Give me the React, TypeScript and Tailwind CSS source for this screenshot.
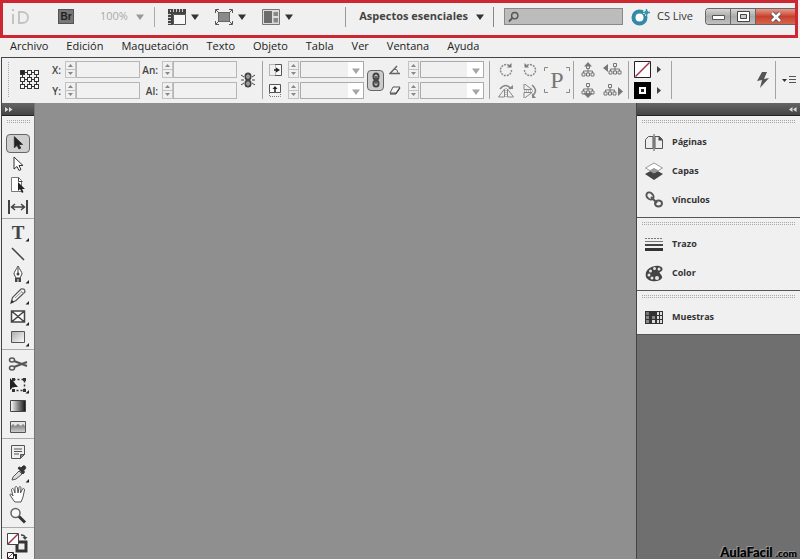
import React from 'react';

const Caret: React.FC<{ className?: string }> = ({ className = 'text-[#333]' }) => (
  <svg width="8" height="6" viewBox="0 0 8 6" className={`shrink-0 ${className}`} fill="currentColor">
    <path d="M0 0.500h8L4 6z" />
  </svg>
);

const Separator: React.FC = () => <div className="w-px shrink-0 self-stretch bg-[#a3a3a3]" />;

const Grip: React.FC<{ className?: string }> = ({ className = '' }) => (
  <div className={`bg-[conic-gradient(#a8a8a8_25%,transparent_0)] bg-[size:2px_2px] ${className}`} />
);

/* ---------- Application bar ---------- */

const RulerIcon = () => (
  <svg width="18" height="16" viewBox="0 0 18 16">
    <path d="M0 0h18v5H5v11H0z" fill="#444" />
    <path d="M2.500 1v2M5.500 0v3M8.500 0v3M11.500 0v3M14.500 0v3M0 5.500h3M0 8.500h3M0 11.500h3M0 14.500h3" stroke="#ccc" />
    <path d="M5.500 5.500h12v10h-12z" fill="#f8f8f8" stroke="#555" />
  </svg>
);

const ScreenIcon = () => (
  <svg width="18" height="16" viewBox="0 0 18 16">
    <path d="M3.500 3.500h11v9h-11z" fill="#8a8a8a" stroke="#666" />
    <path d="M0.500 4V.500H4M14 .500h3.500V4M0.500 12v3.500H4M14 15.500h3.500V12M1 1l3 3M17 1l-3 3M1 15l3-3M17 15l-3-3" fill="none" stroke="#555" />
  </svg>
);

const ArrangeIcon = () => (
  <svg width="18" height="16" viewBox="0 0 18 16">
    <path d="M0.500 0.500h17v15H.500z" fill="#ddd" stroke="#777" />
    <path d="M2 2h8v12H2z" fill="#6c6c6c" />
    <path d="M11.500 3h4.500v4h-4.500zM11.500 9h4.500v4.500h-4.500z" fill="#888" />
  </svg>
);

const AppBar: React.FC = () => (
  <header className="mr-[2px] flex h-[38px] items-center border-[3px] border-[#cd2733] pb-[5px] pl-[7px]">
    <svg width="20" height="16" viewBox="0 0 20 16" className="shrink-0" fill="none" stroke="#c4c4c4" strokeWidth="2">
      <path d="M3 5v10M3 0v2M9 3v11h3c8 0 8-11 0-11z" />
    </svg>
    <button className="ml-7 flex h-[15px] w-4 shrink-0 items-center justify-center border border-[#555] bg-[#777] font-['Liberation_Sans'] text-[10px] font-bold text-[#222]">
      Br
    </button>
    <button className="ml-[26px] flex shrink-0 items-center gap-2 text-[11px] text-[#aaa]">
      100% <Caret className="text-[#999]" />
    </button>
    <div className="ml-[10px] h-5 w-px bg-[#aaa]" />
    <div className="ml-[13px] flex shrink-0 items-center gap-4">
      {[RulerIcon, ScreenIcon, ArrangeIcon].map((Icon, i) => (
        <button key={i} aria-label={['Ver opciones', 'Modo de pantalla', 'Organizar documentos'][i]} className="flex items-center gap-[5px]">
          <Icon />
          <Caret />
        </button>
      ))}
    </div>
    <div className="ml-auto flex shrink-0 items-center">
      <div className="h-5 w-px bg-[#999]" />
      <button className="ml-[13px] flex items-center gap-2 whitespace-nowrap text-[11px] font-bold text-[#444]">
        Aspectos esenciales <Caret />
      </button>
      <div className="ml-[9px] h-5 w-px bg-[#888]" />
      <label className="ml-[10px] flex h-[17px] w-[119px] items-center border border-[#888] bg-[#bcbcbc] pl-[3px]">
        <svg width="12" height="12" viewBox="0 0 12 12" fill="none" stroke="#555" strokeWidth="1.500">
          <circle cx="7.500" cy="4.500" r="3.500" />
          <path d="M5 7L1 11" strokeWidth="2" />
        </svg>
        <input aria-label="Buscar" className="w-full min-w-0 bg-transparent pl-1 text-[11px] outline-none" />
      </label>
      <button className="ml-2 flex items-center gap-[6px] whitespace-nowrap text-[11px] text-[#333]">
        <svg width="20" height="18" viewBox="0 0 20 18">
          <circle cx="8.500" cy="9.500" r="6" fill="#fff" stroke="#3489a6" strokeWidth="4" />
          <path d="M12 4.500h7M15.500 1v7" stroke="#f0f0f0" strokeWidth="3" />
          <path d="M12 4.500h7M15.500 1v7" stroke="#3b94ae" strokeWidth="1.500" />
          <circle cx="15.500" cy="4.500" r="2" fill="#3b94ae" />
        </svg>
        CS Live
      </button>
      <div className="ml-3 flex h-[17px] overflow-hidden rounded-l border border-r-0 border-[#666]">
        <button aria-label="Minimizar" className="flex w-[25px] items-center justify-center border-r border-[#666] bg-linear-to-b from-[#d6d6d6] via-[#aaa] to-[#c0c0c0]">
          <svg width="13" height="10" viewBox="0 0 13 10"><path d="M.500 3.500h12v4H.500z" fill="#fff" stroke="#555" /></svg>
        </button>
        <button aria-label="Maximizar" className="flex w-[25px] items-center justify-center border-r border-[#666] bg-linear-to-b from-[#d6d6d6] via-[#aaa] to-[#c0c0c0]">
          <svg width="13" height="11" viewBox="0 0 13 11">
            <path d="M.500 .500h12v10H.500z" fill="#fff" stroke="#444" />
            <path d="M3.500 3.500h6v4h-6z" fill="#ccc" stroke="#444" />
          </svg>
        </button>
        <button aria-label="Cerrar" className="flex w-[39px] items-center justify-center bg-linear-to-b from-[#e39a8c] via-[#c8402c] to-[#d4664e]">
          <svg width="14" height="12" viewBox="0 0 14 12">
            <path d="M3 2l8 8M11 2l-8 8" stroke="#555" strokeWidth="4.500" />
            <path d="M3 2l8 8M11 2l-8 8" stroke="#fff" strokeWidth="2.500" />
          </svg>
        </button>
      </div>
    </div>
  </header>
);

const menus = ['Archivo', 'Edición', 'Maquetación', 'Texto', 'Objeto', 'Tabla', 'Ver', 'Ventana', 'Ayuda'];

const MenuBar: React.FC = () => (
  <nav className="flex h-[19px] items-start gap-[18px] pl-[10px] text-[11px] leading-4 text-[#222]">
    {menus.map((m) => (
      <button key={m}>{m}</button>
    ))}
  </nav>
);

/* ---------- Control panel ---------- */

const Spinner: React.FC<{ name: string }> = ({ name }) => (
  <div className="flex h-[17px] w-[11px] shrink-0 flex-col border border-[#c2c2c2]">
    <button aria-label={`Aumentar ${name}`} className="flex flex-1 items-center justify-center border-b border-[#c2c2c2]">
      <svg width="5" height="3" viewBox="0 0 5 3" fill="#888"><path d="M0 3h5L2.500 0z" /></svg>
    </button>
    <button aria-label={`Disminuir ${name}`} className="flex flex-1 items-center justify-center">
      <svg width="5" height="3" viewBox="0 0 5 3" fill="#888"><path d="M0 0h5L2.500 3z" /></svg>
    </button>
  </div>
);

const NumberField: React.FC<{ id: string; label: string }> = ({ id, label }) => (
  <div className="flex h-[17px] items-center">
    <label htmlFor={id} className="w-[17px] text-right text-[10px] font-semibold leading-4 text-[#444]">{label}</label>
    <div className="ml-1 flex">
      <Spinner name={label} />
      <input id={id} className="h-[17px] w-16 border border-[#b5b5b5] bg-[#f1f1f1] px-1 text-[10px] outline-none" />
    </div>
  </div>
);

const SelectField: React.FC<{ name: string; icon: React.ReactNode }> = ({ name, icon }) => (
  <div className="flex h-[17px] items-center">
    <div className="flex w-[14px] justify-center">{icon}</div>
    <div className="ml-[6px]"><Spinner name={name} /></div>
    <div className="relative ml-px">
      <select aria-label={name} className="block h-[17px] w-16 appearance-none border border-[#aaa] bg-linear-to-r from-[#f0f0f0] from-75% to-white to-75% text-[10px]" />
      <Caret className="pointer-events-none absolute top-[7px] right-1 text-[#a5a5a5]" />
    </div>
  </div>
);

const ScaleX = () => (
  <svg width="13" height="12" viewBox="0 0 13 12">
    <path d="M6 .500h6.500v11H6" fill="#f8f8f8" stroke="#555" />
    <path d="M.500 .500h6v11h-6z" fill="none" stroke="#777" strokeDasharray="1 1" />
    <path d="M5 6h3" stroke="#222" strokeWidth="1.500" /><path d="M7 3.500l4 2.500-4 2.500z" fill="#222" />
  </svg>
);
const ScaleY = () => (
  <svg width="12" height="13" viewBox="0 0 12 13">
    <path d="M.500 .500h11v8H.500z" fill="#f8f8f8" stroke="#555" />
    <path d="M.500 9v3.500h11V9" fill="none" stroke="#777" strokeDasharray="1 1" />
    <path d="M6 4v4" stroke="#222" strokeWidth="1.500" /><path d="M3.500 5L6 2l2.500 3z" fill="#222" />
  </svg>
);
const AngleIcon = () => (
  <svg width="12" height="10" viewBox="0 0 12 10" fill="none" stroke="#666">
    <path d="M8 1L1 8.500h10" strokeWidth="1.500" /><path d="M5 4q4 0 4 4" />
  </svg>
);
const ShearIcon = () => (
  <svg width="12" height="9" viewBox="0 0 12 9"><path d="M4 1h7L7 7H1z" fill="#f5f5f5" stroke="#555" /><path d="M1 8h6l4-6" fill="none" stroke="#333" /></svg>
);

const ChainLink: React.FC<{ broken?: boolean }> = ({ broken }) => (
  <svg width="14" height="16" viewBox="0 0 14 16" fill="none" stroke="#444">
    <rect x="4.500" y="1.500" width="5" height="6" rx="2.500" strokeWidth="2" />
    <rect x="4.500" y="8.500" width="5" height="6" rx="2.500" strokeWidth="2" />
    {broken ? <path d="M0 3l3 2M14 3l-3 2M0 8h3M14 8h-3M0 13l3-2M14 13l-3-2M7 3v3M7 10v3" /> : <path d="M7 4v8" strokeWidth="1.500" />}
  </svg>
);

const ReferencePoint = () => (
  <svg width="20" height="20" viewBox="0 0 20 20" fill="#f8f8f8" stroke="#333">
    <path d="M2.500 2.500h14v14h-14zM2.500 9.500h14M9.500 2.500v14" fill="none" />
    {[2.5, 9.5, 16.5].map((y) => [2.5, 9.5, 16.5].map((x) => (
      <rect key={`${x}-${y}`} x={x - 2} y={y - 2} width="4" height="4" fill={x + y === 5 ? '#222' : '#f8f8f8'} />
    )))}
  </svg>
);

const RotateIcon: React.FC<{ flip?: boolean }> = ({ flip }) => (
  <svg width="14" height="14" viewBox="0 0 14 14" fill="none" stroke="#888">
    <g transform={flip ? 'translate(14 0) scale(-1 1)' : undefined}>
      <path d="M10 2.500A5.500 5.500 0 1 0 12.500 7" strokeDasharray="2 1" strokeWidth="1.500" />
      <path d="M8 4.500h4.500V0z" fill="#777" stroke="none" />
    </g>
  </svg>
);

const FlipIcon: React.FC<{ vertical?: boolean }> = ({ vertical }) => (
  <svg width="16" height="14" viewBox="0 0 16 14" fill="none" stroke="#888">
    <g transform={vertical ? 'rotate(90 8 7)' : undefined}>
      <path d="M6.500 5v8H.500zM9.500 5v8h6z" /><path d="M8 4v10" strokeDasharray="1 1" />
      <path d="M2 5q6-7 11 0" strokeWidth="1.500" /><path d="M10 5h5V1z" fill="#888" stroke="none" />
    </g>
  </svg>
);

const tree = 'M7 5v3M2.500 10V8h9v2M7 8v2M1 10h3v3H1zM5.500 10h3v3h-3zM10 10h3v3h-3zM5.500 2.500h3v3h-3z';
const TreeIcon: React.FC<{ dir: 'up' | 'down' | 'left' | 'right' }> = ({ dir }) => (
  <svg width="20" height="15" viewBox="0 0 20 15" fill="none" stroke="#777">
    {dir === 'up' && <><g transform="translate(0 1)"><path d={tree} /></g><path d="M3 4.500h8L7 0z" fill="#777" stroke="none" /></>}
    {dir === 'down' && <><g transform="translate(0 -2)"><path d={tree} /></g><path d="M2 10h10l-5 5z" fill="#777" stroke="none" /></>}
    {dir === 'left' && <><g transform="translate(5 -1)"><path d={tree} /></g><path d="M5 2v8L0 6z" fill="#777" stroke="none" /></>}
    {dir === 'right' && <><g transform="translate(0 -1)"><path d={tree} /></g><path d="M15 4v9l5-4.500z" fill="#777" stroke="none" /></>}
  </svg>
);

const SwatchArrow: React.FC<{ label: string }> = ({ label }) => (
  <button aria-label={label} className="flex h-[17px] w-4 items-center justify-center">
    <svg width="4" height="7" viewBox="0 0 4 7" fill="#444"><path d="M0 0l4 3.500L0 7z" /></svg>
  </button>
);

const ControlPanel: React.FC = () => (
  <section className="ml-px flex h-[46px] shrink-0 items-center border-t border-l border-[#444] pt-[3px] pb-1 pl-[5px]">
    <Grip className="h-9 w-[3px] shrink-0" />
    <div className="ml-[10px] shrink-0"><ReferencePoint /></div>
    <div className="ml-1 flex shrink-0 flex-col gap-1">
      <NumberField id="pos-x" label="X:" />
      <NumberField id="pos-y" label="Y:" />
    </div>
    <div className="ml-px flex shrink-0 flex-col gap-1">
      <NumberField id="ancho" label="An:" />
      <NumberField id="alto" label="Al:" />
    </div>
    <button aria-label="Restringir proporciones" className="ml-1 shrink-0"><ChainLink broken /></button>
    <div className="ml-[7px] flex self-stretch"><Separator /></div>
    <div className="ml-[5px] flex shrink-0 flex-col gap-1">
      <SelectField name="Escala X" icon={<ScaleX />} />
      <SelectField name="Escala Y" icon={<ScaleY />} />
    </div>
    <button aria-label="Restringir escala" className="ml-[3px] flex h-[21px] w-[17px] shrink-0 items-center justify-center rounded-sm border border-[#666] bg-[#ccc]">
      <ChainLink />
    </button>
    <div className="ml-1 flex shrink-0 flex-col gap-1">
      <SelectField name="Ángulo" icon={<AngleIcon />} />
      <SelectField name="Distorsión" icon={<ShearIcon />} />
    </div>
    <div className="ml-[5px] flex self-stretch"><Separator /></div>
    <div className="ml-2 grid shrink-0 grid-cols-2 gap-x-2 gap-y-1">
      <button aria-label="Girar a la derecha" className="flex h-[17px] w-4 items-center justify-center"><RotateIcon /></button>
      <button aria-label="Girar a la izquierda" className="flex h-[17px] w-4 items-center justify-center"><RotateIcon flip /></button>
      <button aria-label="Voltear horizontal" className="flex h-[17px] w-4 items-center justify-center"><FlipIcon /></button>
      <button aria-label="Voltear vertical" className="flex h-[17px] w-4 items-center justify-center"><FlipIcon vertical /></button>
    </div>
    <div className="relative ml-[6px] flex h-[26px] w-[26px] shrink-0 items-center justify-center font-['Liberation_Serif'] text-[24px] leading-6 text-[#777]">
      <svg width="26" height="26" viewBox="0 0 26 26" className="absolute inset-0" fill="none" stroke="#888">
        <path d="M.500 4V.500H4M22 .500h3.500V4M.500 22v3.500H4M22 25.500h3.500V22" />
      </svg>
      P
    </div>
    <div className="ml-[3px] flex self-stretch"><Separator /></div>
    <div className="ml-[7px] grid shrink-0 grid-cols-2 gap-x-[2px] gap-y-1">
      <button aria-label="Seleccionar contenedor" className="flex h-[17px] items-center"><TreeIcon dir="up" /></button>
      <button aria-label="Seleccionar anterior" className="flex h-[17px] items-center"><TreeIcon dir="left" /></button>
      <button aria-label="Seleccionar contenido" className="flex h-[17px] items-center"><TreeIcon dir="down" /></button>
      <button aria-label="Seleccionar siguiente" className="flex h-[17px] items-center"><TreeIcon dir="right" /></button>
    </div>
    <div className="ml-[5px] flex self-stretch"><Separator /></div>
    <div className="ml-[5px] grid shrink-0 grid-cols-2 gap-y-1">
      <button aria-label="Relleno" className="h-[17px] w-[17px]">
        <svg width="17" height="17" viewBox="0 0 17 17"><path d="M.500 .500h16v16H.500z" fill="#fff" stroke="#222" /><path d="M1.500 15.500l14-14" stroke="#a03048" strokeWidth="1.500" /></svg>
      </button>
      <SwatchArrow label="Opciones de relleno" />
      <button aria-label="Trazo" className="h-[17px] w-[17px]">
        <svg width="17" height="17" viewBox="0 0 17 17"><path d="M0 0h17v17H0z" /><path d="M6 6h5v5H6z" fill="#222" stroke="#fff" strokeWidth="2" /></svg>
      </button>
      <SwatchArrow label="Opciones de trazo" />
    </div>
    <div className="ml-[3px] flex self-stretch"><Separator /></div>
    <button aria-label="Aplicación rápida" className="ml-auto shrink-0">
      <svg width="12" height="16" viewBox="0 0 12 16" fill="#555"><path d="M5 0L0 9l5-1-2 8L12 6 7 7l3-7z" /></svg>
    </button>
    <div className="ml-[6px] flex self-stretch"><Separator /></div>
    <button aria-label="Menú del panel" className="mr-1 ml-[6px] shrink-0">
      <svg width="14" height="9" viewBox="0 0 14 9"><path d="M0 3h5L2.500 6z" fill="#333" /><path d="M7 .500h7M7 3.500h7M7 6.500h7" stroke="#555" /></svg>
    </button>
  </section>
);

/* ---------- Tools ---------- */

interface Tool {
  name: string;
  icon: React.ReactNode;
  more?: boolean;
  active?: boolean;
}

const arrow = 'M6 3v12l3-2.500 2 4 2-1-2-4h4z';

const toolGroups: Tool[][] = [
  [
    { name: 'Selección', active: true, icon: <path d={arrow} fill="#222" stroke="#333" /> },
    { name: 'Selección directa', icon: <path d={arrow} fill="#fff" stroke="#333" /> },
    { name: 'Página', icon: <><path d="M3.500 2.500h7l3 3v11h-10z" fill="#fff" stroke="#777" /><path d="M10.500 2.500v4h4" fill="none" stroke="#444" /><path d="M10 7v9l2-2 2 4 1.500-1-1.500-3h3z" fill="#222" /></> },
    { name: 'Espacio', icon: <><path d="M1 4v14M19 4v14" stroke="#444" strokeWidth="2" /><path d="M4 11h12M7 8l-3.500 3L7 14M13 8l3.500 3-3.500 3" fill="none" stroke="#444" strokeWidth="1.500" /></> },
  ],
  [
    { name: 'Texto', more: true, icon: <text x="10" y="17" textAnchor="middle" fontFamily="Liberation Serif, serif" fontSize="19" fontWeight="bold" fill="#444">T</text> },
    { name: 'Línea', icon: <path d="M4 5l12 12" stroke="#444" strokeWidth="1.500" /> },
    { name: 'Pluma', more: true, icon: <><path d="M10 2C8 6 6 8 6 10l2 4h4l2-4c0-2-2-4-4-8z" fill="#fff" stroke="#444" /><path d="M10 4v6" stroke="#444" /><circle cx="10" cy="10" r="1.500" fill="#444" /><path d="M7 14h6v4H7z" fill="#444" /><path d="M10 15v3" stroke="#eee" /></> },
    { name: 'Lápiz', more: true, icon: <><path d="M3 18l1.500-5.500L13 4q4-1 4 3l-9 8.500z" fill="#f4f4f4" stroke="#555" strokeWidth="1.200" /><path d="M12 5l3.500 3.500M7 13l7-6.500" stroke="#999" /><path d="M3 18l1-3 2 2z" fill="#222" /></> },
    { name: 'Marco rectangular', more: true, icon: <path d="M3.500 5h13v11h-13zM3.500 5l13 11M16.500 5l-13 11" fill="#fafafa" stroke="#444" strokeWidth="1.500" /> },
    { name: 'Rectángulo', more: true, icon: <path d="M3.500 4.500h13v11h-13z" fill="url(#tool-light)" stroke="#555" /> },
  ],
  [
    { name: 'Tijeras', icon: <><path d="M6 8l13 5M6 14l13-5" stroke="#555" strokeWidth="2" /><ellipse cx="4" cy="7" rx="2.500" ry="2" fill="none" stroke="#555" strokeWidth="1.500" /><ellipse cx="4" cy="15" rx="2.500" ry="2" fill="none" stroke="#555" strokeWidth="1.500" /></> },
    { name: 'Transformación libre', more: true, icon: <><path d="M5.500 5.500h11v11h-11z" fill="none" stroke="#333" strokeWidth="1.500" strokeDasharray="2 2" /><path d="M4 4h3v3H4zM15 4h3v3h-3zM15 15h3v3h-3zM4 15h3v3H4z" fill="#333" /><path d="M2 4v12l3-3h5z" fill="#222" /></> },
    { name: 'Muestra de degradado', icon: <path d="M2.500 5.500h15v11h-15z" fill="url(#tool-gradient)" stroke="#444" /> },
    { name: 'Desvanecer degradado', icon: <><path d="M2.500 5.500h15v11h-15z" fill="#e6e6e6" stroke="#555" /><path d="M3 10l2-2 2 2 3-2 3 2 2-2 2 2v6H3z" fill="url(#tool-fade)" /></> },
  ],
  [
    { name: 'Nota', icon: <><path d="M3.500 3.500h13v9l-4 4h-9z" fill="#eee" stroke="#555" /><path d="M6 7h8M6 9.500h8M6 12h5" stroke="#555" /><path d="M16.500 12.500h-4v4z" fill="#888" stroke="#555" /></> },
    { name: 'Cuentagotas', more: true, icon: <><path d="M4 17l1-3 6-6 3 3-6 5z" fill="#ddd" stroke="#555" /><path d="M10 5l5 6 1.500-2-1-1.500C19 6 18 2 15 3l-2 2-1.500-1z" fill="#333" stroke="#333" /></> },
    { name: 'Mano', icon: <path d="M6 17L2 11c0-2 2-1 3 1L3.500 6c0-2 2-2 2.500 0l1 3V4c0-2 2-2 2.500 0l.500 5 1-5c0-2 2-2 2 0l-.500 5 2-4c1-1 2-.500 2 1L15 13l-2 5H7z" fill="#fff" stroke="#555" /> },
    { name: 'Zoom', icon: <><circle cx="7.500" cy="8" r="4.500" fill="#f8f8f8" stroke="#666" strokeWidth="1.500" /><path d="M11 11.500l6 6" stroke="#333" strokeWidth="3" /></> },
  ],
];

const ToolsPanel: React.FC = () => (
  <aside className="ml-px flex w-[33px] shrink-0 flex-col border-l border-[#444] bg-[#f0f0f0]">
    <svg width="0" height="0" className="absolute">
      <defs>
        <linearGradient id="tool-light" x2="1" y2="1"><stop stopColor="#aaa" /><stop offset="1" stopColor="#fff" /></linearGradient>
        <linearGradient id="tool-gradient"><stop stopColor="#fff" /><stop offset="1" stopColor="#111" /></linearGradient>
        <linearGradient id="tool-fade" x2="0" y2="1"><stop stopColor="#777" /><stop offset="1" stopColor="#ccc" /></linearGradient>
      </defs>
    </svg>
    <button aria-label="Expandir herramientas" className="flex h-[13px] shrink-0 items-center border-b border-[#222] bg-linear-to-b from-[#666] to-[#444] pl-[3px]">
      <svg width="8" height="5" viewBox="0 0 8 5" fill="#ddd"><path d="M0 0l3.500 2.500L0 5zM4 0l3.500 2.500L4 5z" /></svg>
    </button>
    <Grip className="mx-auto mt-1 mb-[9px] h-1 w-6 shrink-0" />
    {toolGroups.map((group, i) => (
      <div key={i} className="mb-[3px] flex shrink-0 flex-col border-b border-[#aaa] pb-px">
        {group.map((tool) => (
          <button key={tool.name} aria-label={tool.name} className="flex h-[21px] items-center justify-center">
            <span className={tool.active ? 'flex h-[19px] w-6 items-center justify-center rounded-sm border border-[#666] bg-[#cfcfcf]' : 'flex'}>
              <svg width="24" height="20" viewBox="-2 1 24 20">
                {tool.icon}
                {tool.more && <path d="M21 16v3.500h-3.500z" fill="#222" />}
              </svg>
            </span>
          </button>
        ))}
      </div>
    ))}
    <button aria-label="Relleno y trazo" className="mt-px flex shrink-0 justify-center">
      <svg width="24" height="32" viewBox="0 0 24 32">
        <path d="M11 10h9v9h-9z" fill="#eee" stroke="#333" strokeWidth="3" />
        <path d="M1.500 1.500h11v11h-11z" fill="#fff" stroke="#444" />
        <path d="M2 12L12 2" stroke="#a03048" strokeWidth="1.500" />
        <path d="M15 3q4 0 4 3" fill="none" stroke="#444" strokeWidth="1.500" /><path d="M16.500 5h5L19 8z" fill="#444" />
        <path d="M5 23h5v5H5z" stroke="#222" strokeWidth="2" fill="#eee" /><path d="M1.500 20.500h6v6h-6z" fill="#fff" stroke="#222" /><path d="M2 26l5-5" stroke="#a03048" />
      </svg>
    </button>
  </aside>
);

/* ---------- Dock ---------- */

const dockGroups: { name: string; icon: React.ReactNode }[][] = [
  [
    { name: 'Páginas', icon: <><path d="M.500 6.500l3-3H8v12H.500zM10 3.500h4.500l3 3v9H10z" fill="#eee" stroke="#555" /><path d="M9 1v17" stroke="#555" /><path d="M13.500 3v4.500H18z" fill="#444" /></> },
    { name: 'Capas', icon: <><path d="M9 7l9 5-9 6-9-6z" fill="#444" /><path d="M9 1l8.500 5L9 11 .500 6z" fill="#fff" stroke="#999" /><path d="M9 6l4.500 2.500L9 11 4.500 8.500z" fill="#999" /></> },
    { name: 'Vínculos', icon: <g fill="none" stroke="#555" strokeWidth="2"><ellipse cx="5" cy="5" rx="3" ry="4" transform="rotate(-45 5 5)" /><ellipse cx="13.500" cy="12.500" rx="3.500" ry="3" /><path d="M6 6l6 6" /></g> },
  ],
  [
    { name: 'Trazo', icon: <><path d="M0 3.500h18" stroke="#777" strokeDasharray="2 1" /><path d="M0 6.500h18" stroke="#777" /><path d="M0 10h18" stroke="#444" strokeWidth="2" /><path d="M0 14.500h18" stroke="#333" strokeWidth="3" /></> },
    { name: 'Color', icon: <><path d="M1 13C-1 6 7 1 14 2c5 1 4 5 1 6-2 1 3 3 2 6-3 5-14 4-16-1z" fill="#444" /><g fill="#e5e5e5"><circle cx="4" cy="11" r="1.500" /><circle cx="5.500" cy="7" r="1.500" /><circle cx="9.500" cy="4.500" r="1.500" /><circle cx="14" cy="5" r="1.500" /><circle cx="7" cy="14" r="1.500" /><circle cx="12" cy="14" r="2" /></g></> },
  ],
  [
    { name: 'Muestras', icon: <><path d="M0 3h18v13H0z" fill="#333" /><path d="M1 4h3v3H1z" fill="#777" /><path d="M12 4h2v3h-2zM15 4h2v3h-2zM12 8h2v3h-2zM15 8h2v3h-2zM7 12h3v3H7zM12 12h2v3h-2zM15 12h2v3h-2z" fill="#ddd" /><path d="M1 8h3v3H1zM1 12h3v3H1zM7 8h3v3H7z" fill="#888" /></> },
  ],
];

const Dock: React.FC = () => (
  <aside className="flex w-[164px] shrink-0 flex-col border-l border-[#444] bg-[#6f6f6f]">
    <button aria-label="Expandir paneles" className="flex h-[13px] shrink-0 items-center justify-end border-b border-[#222] bg-linear-to-b from-[#666] to-[#444] pr-[3px]">
      <svg width="8" height="5" viewBox="0 0 8 5" fill="#ddd"><path d="M3.500 0L0 2.500 3.500 5zM7.500 0L4 2.500 7.500 5z" /></svg>
    </button>
    {dockGroups.map((group, i) => (
      <div key={i} className="flex flex-col border-b border-[#555] bg-[#f0f0f0] pt-1 pb-[3px]">
        <Grip className="mr-1 mb-[3px] ml-1 h-1" />
        {group.map((item) => (
          <button key={item.name} className="flex h-[29px] items-center gap-[9px] pl-2 text-[9px] font-bold text-[#333]">
            <svg width="18" height="18" viewBox="0 0 18 18" className="shrink-0">{item.icon}</svg>
            {item.name}
          </button>
        ))}
      </div>
    ))}
  </aside>
);

const App: React.FC = () => (
  <div className="relative flex h-screen flex-col overflow-hidden bg-[#f0f0f0] font-['Open_Sans','Noto_Sans',sans-serif]">
    <AppBar />
    <MenuBar />
    <ControlPanel />
    <div className="flex min-h-0 flex-1">
      <ToolsPanel />
      <main className="flex-1 border-l border-[#777] bg-[#8f8f8f]" />
      <Dock />
    </div>
    <div className="absolute right-[3px] bottom-0 font-['Lato'] text-[13px] leading-3 font-black text-black [text-shadow:-1px_-1px_0_#999]">
      AulaFacil <span className="text-[10px]">.com</span>
    </div>
  </div>
);

export default App;
